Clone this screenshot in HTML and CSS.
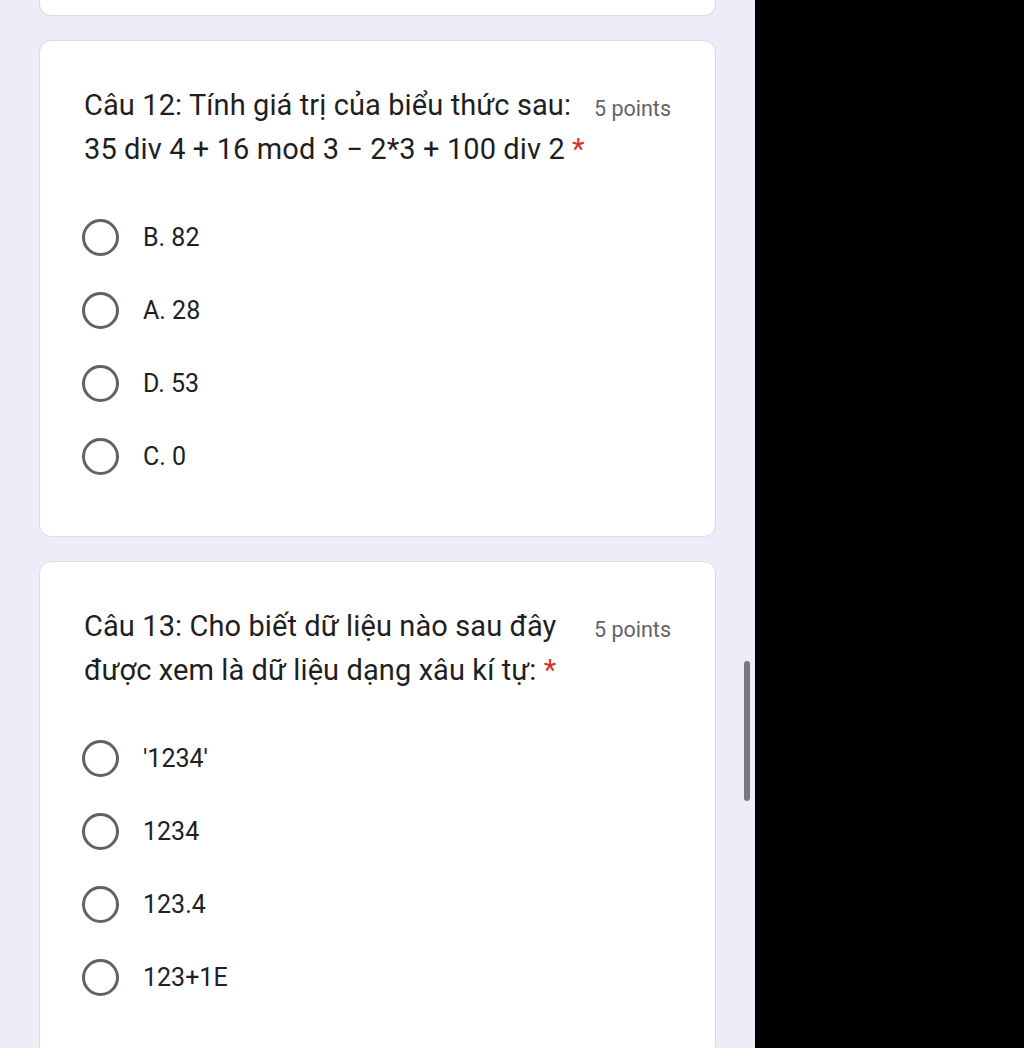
FILE: index.html
```html
<!DOCTYPE html>
<html lang="vi">

<head>
    <meta charset="UTF-8">
    <meta name="viewport" content="width=device-width, initial-scale=1.0">
    <title>Bài kiểm tra</title>
    <link rel="stylesheet" href="styles.css">
</head>

<body>
    <div class="tela">
        <main class="pagina">

            <div class="card card_fim"></div>

            <section class="card">
                <div class="titulo_linha">
                    <p class="titulo">Câu 12: Tính giá trị của biểu thức sau:<br>35 div 4 + 16 mod 3 − 2*3 + 100 div 2 <span class="obrigatorio">*</span></p>
                    <span class="pontos">5 points</span>
                </div>
                <div class="opcoes">
                    <label class="opcao"><span class="radio"></span><span>B. 82</span></label>
                    <label class="opcao"><span class="radio"></span><span>A. 28</span></label>
                    <label class="opcao"><span class="radio"></span><span>D. 53</span></label>
                    <label class="opcao"><span class="radio"></span><span>C. 0</span></label>
                </div>
            </section>

            <section class="card">
                <div class="titulo_linha">
                    <p class="titulo">Câu 13: Cho biết dữ liệu nào sau đây<br>được xem là dữ liệu dạng xâu kí tự: <span class="obrigatorio">*</span></p>
                    <span class="pontos">5 points</span>
                </div>
                <div class="opcoes">
                    <label class="opcao"><span class="radio"></span><span>'1234'</span></label>
                    <label class="opcao"><span class="radio"></span><span>1234</span></label>
                    <label class="opcao"><span class="radio"></span><span>123.4</span></label>
                    <label class="opcao"><span class="radio"></span><span>123+1E</span></label>
                </div>
            </section>

            <div class="barra"></div>
        </main>
        <div class="lado_preto"></div>
    </div>
</body>

</html>
```

FILE: styles.css
```css
* {
    margin: 0;
    padding: 0;
    box-sizing: border-box;
}
body{
    font-family: 'Roboto', 'Noto Sans', sans-serif;
    background-color: #000000;
    color: #202124;
}
.tela{
    display: flex;
    width: 1024px;
    height: 1048px;
    overflow: hidden;
}
.pagina{
    position: relative;
    width: 755px;
    background-color: #f0ebf8;
    padding-left: 39px;
    padding-right: 39px;
    display: flex;
    flex-direction: column;
    gap: 24px;
}
.lado_preto{
    flex: 1;
    background-color: #000000;
}
.card{
    width: 677px;
    flex-shrink: 0;
    background-color: #ffffff;
    border: 1px solid #dadce0;
    border-radius: 12px;
    padding: 42px 44px 43px 44px;
}
.card_fim{
    height: 16px;
    padding: 0;
    border-top: none;
    border-radius: 0 0 12px 12px;
}
.titulo_linha{
    display: flex;
    align-items: flex-start;
}
.titulo{
    flex: 1;
    min-width: 0;
    font-size: 29px;
    font-weight: 400;
    line-height: 44px;
    letter-spacing: 0.1px;
    white-space: nowrap;
    color: #1f1f1f;
}
.obrigatorio{
    color: #d93025;
}
.pontos{
    flex-shrink: 0;
    width: 77px;
    margin-top: 6px;
    font-size: 21.5px;
    line-height: 40px;
    color: #5f6368;
    white-space: nowrap;
}
.opcoes{
    margin-top: 30px;
}
.opcao{
    display: flex;
    align-items: center;
    height: 73px;
    font-size: 25px;
    color: #202124;
}
.radio{
    width: 37px;
    height: 37px;
    margin-left: -2px;
    margin-right: 24px;
    border: 3.5px solid #5f6368;
    border-radius: 50%;
}
.barra{
    position: absolute;
    left: 744px;
    top: 661px;
    width: 6px;
    height: 140px;
    border-radius: 3px;
    background-color: #7a7682;
}
```
